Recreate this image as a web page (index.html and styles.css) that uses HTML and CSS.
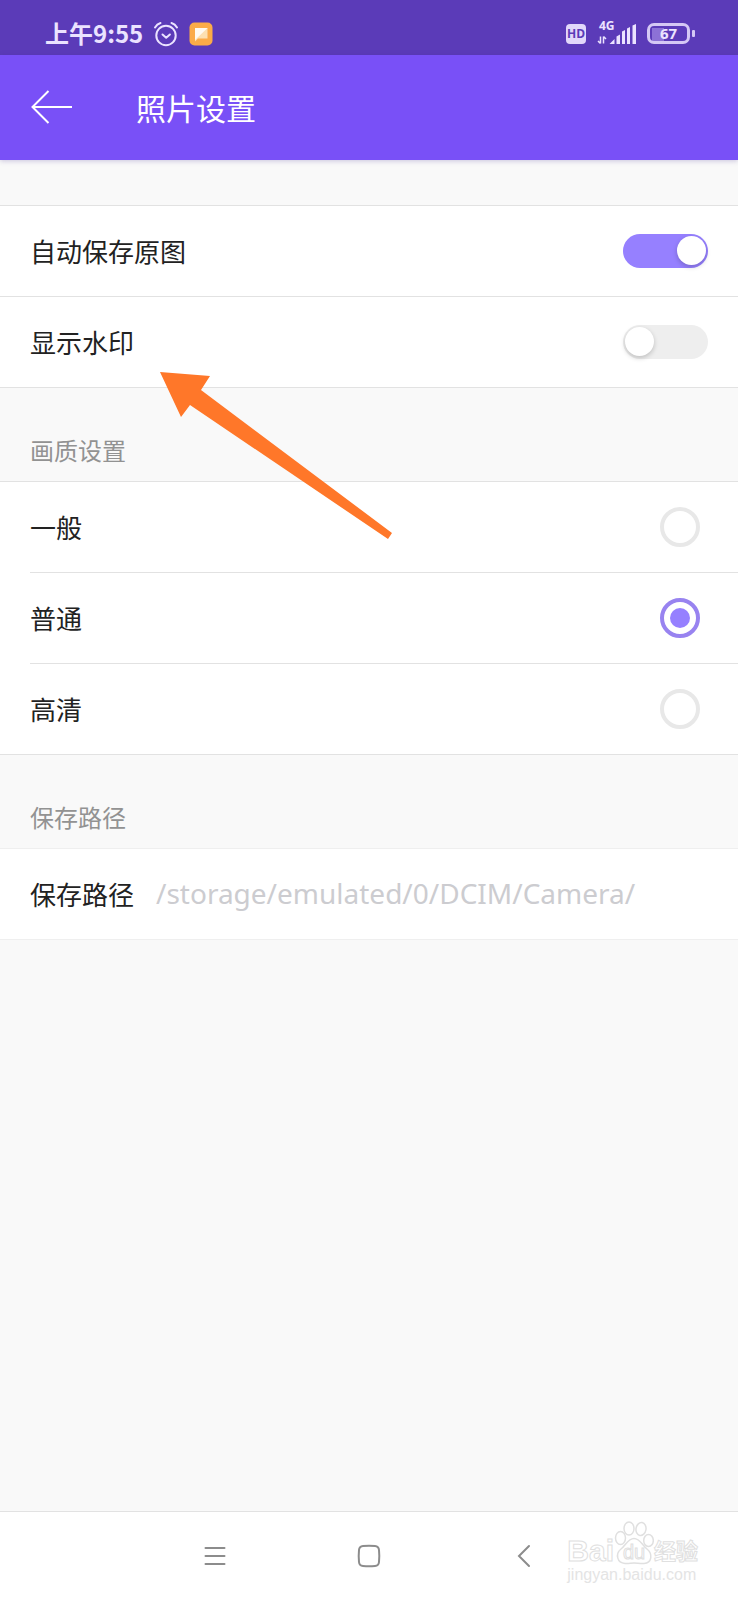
FILE: index.html
```html
<!DOCTYPE html>
<html lang="zh-CN">
<head>
<meta charset="utf-8">
<meta name="viewport" content="width=device-width, initial-scale=1">
<title>照片设置</title>
<link rel="stylesheet" href="styles.css">
</head>
<body>
<div class="screen">
  <div class="status">
    <div class="status-left">
      <span class="clock">上午9:55</span>
      <svg class="alarm" width="26" height="26" viewBox="0 0 26 26" aria-hidden="true">
        <g fill="none" stroke="currentColor" stroke-width="2" stroke-linecap="round" stroke-linejoin="round">
          <circle cx="13" cy="14.500" r="9.700"/>
          <path d="M2 6.500Q4 3 7.500 2M24 6.500Q22 3 18.500 2M9.500 13.500l3.700 3.300 3.700-3.300"/>
        </g>
      </svg>
      <svg class="chat" width="24" height="24" viewBox="0 0 24 24" aria-hidden="true">
        <rect x=".5" y=".5" width="23" height="23" rx="5" fill="#fbab48"/>
        <path d="M6 6h12.500v10.500H9L6 19.500z" fill="#fde0b0"/>
        <path d="M6 6h12.500L6 18z" fill="#fffaf0"/>
      </svg>
    </div>
    <div class="status-right">
      <span class="hd">HD</span>
      <div class="signal">
        <span class="network">4G</span>
        <svg width="40" height="22" viewBox="0 0 40 22" aria-hidden="true">
          <g fill="currentColor">
            <path d="M12.500 21l5-5v5zM19.500 13.500l3.500-2V21h-3.500zM25 8.500l3-1.500v14h-3zM30 5.500l3-1.500v17h-3zM35.500 2.500L39 1v20h-3.500z"/>
          </g>
          <path d="M3.500 13.500v7M1 18l2.500 2.500M6.500 20.500v-7M9 16l-2.500-2.500" fill="none" stroke="currentColor" stroke-width="1.500"/>
        </svg>
      </div>
      <div class="battery"><span class="battery-body">67</span><span class="battery-tip"></span></div>
    </div>
  </div>
  <header class="header">
    <button class="back" type="button" aria-label="返回">
      <svg width="42" height="36" viewBox="0 0 42 36" aria-hidden="true"><path d="M17.500 2L1.500 18l16 16M1.500 18H41" fill="none" stroke="currentColor" stroke-width="2"/></svg>
    </button>
    <h1 class="title">照片设置</h1>
  </header>
  <main class="content">
    <section class="group group-first">
      <label class="row"><span class="label">自动保存原图</span><input class="switch" type="checkbox" role="switch" checked></label>
      <label class="row"><span class="label">显示水印</span><input class="switch" type="checkbox" role="switch"></label>
    </section>
    <h2 class="caption" id="quality">画质设置</h2>
    <section class="group inset" role="radiogroup" aria-labelledby="quality">
      <label class="row"><span class="label">一般</span><input class="radio" type="radio" name="quality"></label>
      <label class="row"><span class="label">普通</span><input class="radio" type="radio" name="quality" checked></label>
      <label class="row"><span class="label">高清</span><input class="radio" type="radio" name="quality"></label>
    </section>
    <h2 class="caption">保存路径</h2>
    <section class="group group-light">
      <button class="row path-row" type="button"><span class="label">保存路径</span><span class="path">/storage/emulated/0/DCIM/Camera/</span></button>
    </section>
    <svg class="pointer" width="234" height="170" viewBox="0 0 234 170" aria-hidden="true"><path d="M0 0L50 4 41 18 232 161 228 167 30 33 21 45z" fill="#ff7729"/></svg>
  </main>
  <nav class="nav">
    <button type="button" aria-label="最近任务"><svg width="24" height="24" viewBox="0 0 24 24" aria-hidden="true"><path d="M2.500 4h19M2.500 12h19M2.500 20h19" fill="none" stroke="currentColor" stroke-width="2" stroke-linecap="round"/></svg></button>
    <button type="button" aria-label="主页"><svg width="24" height="24" viewBox="0 0 24 24" aria-hidden="true"><path d="M6 2Q12 1.400 18 2 21.700 2.300 22 6 22.600 12 22 18 21.700 21.700 18 22 12 22.600 6 22 2.300 21.700 2 18 1.400 12 2 6 2.300 2.300 6 2z" fill="none" stroke="currentColor" stroke-width="2"/></svg></button>
    <button type="button" aria-label="返回上一页"><svg width="24" height="24" viewBox="0 0 24 24" aria-hidden="true"><path d="M18 2L8 12l10 10" fill="none" stroke="currentColor" stroke-width="2" stroke-linecap="round"/></svg></button>
  </nav>
  <div class="watermark">
    <div class="brand">
      <span class="bai">Bai</span>
      <span class="paw">
        <svg width="40" height="44" viewBox="0 0 40 44" aria-hidden="true">
          <g fill="#fff" stroke="#e0e0e0" stroke-width="1.500">
            <ellipse cx="6.500" cy="17" rx="5" ry="6.500"/>
            <ellipse cx="15" cy="7.500" rx="5" ry="6.500"/>
            <ellipse cx="27" cy="8" rx="5" ry="6.500" transform="rotate(10 27 8)"/>
            <ellipse cx="34.500" cy="19.500" rx="4.800" ry="6"/>
            <path d="M20 17.500C14 17.500 12 24 7 28 1 33 3 42 11 42.500 15 42.700 17 42 20 42S26 42.700 30 42.500C38 42 39 33 33 28 28 24 26 17.500 20 17.500z"/>
          </g>
        </svg>
        <span class="du">du</span>
      </span>
      <span class="jingyan">经验</span>
    </div>
    <div class="site">jingyan.baidu.com</div>
  </div>
</div>
</body>
</html>
```
FILE: styles.css
```css
* {
  box-sizing: border-box;
}

body {
  margin: 0;
  background: #f9f9f9;
  color: #222;
  font-family: "Noto Sans CJK SC", sans-serif;
}

button {
  margin: 0;
  padding: 0;
  border: 0;
  background: none;
  color: inherit;
  font: inherit;
}

svg {
  display: block;
}

.screen {
  position: relative;
  display: flex;
  flex-direction: column;
  min-height: 100vh;
}

.status {
  display: flex;
  align-items: center;
  justify-content: space-between;
  height: 55px;
  padding: 12px 43px 0 45px;
  background: #5b3bb8;
  color: #ebe3ff;
}

.status-left,
.status-right {
  display: flex;
  align-items: center;
}

.clock {
  padding-bottom: 2px;
  font: bold 24px/28px "Noto Sans CJK SC", sans-serif;
}

.alarm {
  margin-left: 10px;
}

.chat {
  margin-left: 10px;
}

.hd {
  width: 20px;
  border-radius: 4px;
  background: #e2d8fa;
  color: #5b3bb8;
  font: bold 12px/20px "Open Sans", sans-serif;
  text-align: center;
}

.signal {
  position: relative;
  margin-left: 11px;
}

.network {
  position: absolute;
  top: -2px;
  left: 2px;
  font: bold 12px/10px "Open Sans", sans-serif;
}

.battery {
  display: flex;
  align-items: center;
  gap: 2px;
  margin-left: 10px;
}

.battery-body {
  width: 43px;
  border: 3px solid #d5c8f5;
  border-radius: 7px;
  background: linear-gradient(to right, #8c71d6 12px, transparent 12px) 2px 2px no-repeat;
  font: bold 15px/15px "Open Sans", sans-serif;
  text-align: center;
}

.battery-tip {
  width: 3px;
  height: 7px;
  border-radius: 1px;
  background: #d5c8f5;
}

.header {
  position: relative;
  z-index: 1;
  display: flex;
  align-items: center;
  height: 105px;
  padding: 0 31px 2px;
  background: #7950f7;
  box-shadow: 0 1px 5px rgba(60, 40, 140, 0.25);
  color: #fff;
}

.title {
  margin: 0 0 0 63px;
  font-size: 30px;
  font-weight: 400;
  line-height: 40px;
}

.content {
  position: relative;
  flex: 1;
}

.group {
  border-top: 1px solid #e2e2e2;
  background: #fff;
}

.group-first {
  margin-top: 45px;
}

.row {
  display: flex;
  align-items: center;
  justify-content: space-between;
  width: 100%;
  height: 91px;
  padding: 0 30px;
  border-bottom: 1px solid #e2e2e2;
  font-size: 26px;
}

.label {
  padding-bottom: 2px;
}

.inset .row {
  padding: 0 38px 0 0;
}

.inset {
  padding-left: 30px;
  border-bottom: 1px solid #e2e2e2;
}

.inset .row:last-child {
  height: 90px;
  border-bottom: 0;
}

.caption {
  height: 93px;
  margin: 0;
  padding: 44px 30px 0;
  color: #929292;
  font-size: 24px;
  font-weight: 400;
  line-height: 36px;
}

.group-light,
.group-light .row {
  border-color: #efefef;
}

.path-row {
  justify-content: flex-start;
  gap: 22px;
}

.path {
  padding-bottom: 2px;
  color: #ccccd0;
  font-family: "Noto Sans", sans-serif;
  font-size: 28px;
}

.switch,
.radio {
  flex: none;
  margin: 0;
  appearance: none;
}

.switch {
  display: flex;
  width: 85px;
  height: 34px;
  padding: 2px;
  border-radius: 17px;
  background: #eee;
}

.switch::before {
  width: 29px;
  height: 29px;
  border-radius: 50%;
  background: #fff;
  box-shadow: 0 2px 5px rgba(0, 0, 0, 0.2);
  content: "";
}

.switch:checked {
  justify-content: flex-end;
  background: #9680ff;
}

.radio {
  display: grid;
  place-items: center;
  width: 40px;
  height: 40px;
  border: 4px solid #e8e8e8;
  border-radius: 50%;
}

.radio:checked {
  border-color: #9883f0;
}

.radio:checked::before {
  width: 20px;
  height: 20px;
  border-radius: 50%;
  background: #9680ff;
  content: "";
}

.pointer {
  position: absolute;
  top: 212px;
  left: 160px;
}

.nav {
  display: flex;
  justify-content: center;
  height: 89px;
  border-top: 1px solid #e2e2e2;
  background: #fff;
  color: #8c8c8c;
}

.nav button {
  display: grid;
  place-items: center;
  width: 154px;
}

.watermark {
  position: absolute;
  right: 40px;
  bottom: 15px;
  color: #fff;
  font-family: "Liberation Sans", "Noto Sans CJK SC", sans-serif;
  -webkit-text-stroke: 1px #e0e0e0;
}

.brand {
  display: flex;
  align-items: flex-end;
  height: 44px;
}

.bai {
  font-size: 30px;
  font-weight: bold;
  line-height: 28px;
}

.paw {
  position: relative;
}

.du {
  position: absolute;
  bottom: 2px;
  left: 9px;
  font-size: 20px;
  line-height: 22px;
}

.jingyan {
  font-size: 22px;
  font-weight: bold;
  line-height: 26px;
}

.site {
  color: #e4e4e4;
  font-size: 16px;
  line-height: 20px;
  -webkit-text-stroke: 0;
}
```
